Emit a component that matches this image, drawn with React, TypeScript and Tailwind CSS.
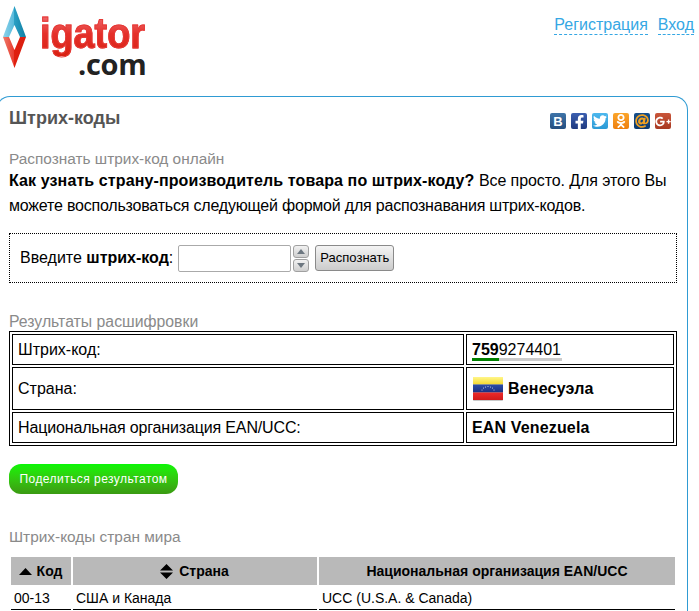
import React from "react";
import { FaFacebookF, FaTwitter, FaOdnoklassniki, FaGooglePlusG, FaAt } from "react-icons/fa";

function Logo() {
  return (
    <div className="relative h-[96px] w-[300px]">
      <svg className="absolute left-[3px] top-[6px]" width="24" height="63" viewBox="0 0 24 63">
        <defs>
          <linearGradient id="up" x1="0" y1="0" x2="1" y2="0">
            <stop offset="0" stopColor="#8fd4ec" />
            <stop offset="0.5" stopColor="#55b8da" />
            <stop offset="0.5" stopColor="#2a9fc4" />
            <stop offset="1" stopColor="#0f7fa3" />
          </linearGradient>
          <linearGradient id="dn" x1="0" y1="0" x2="1" y2="0">
            <stop offset="0" stopColor="#ee7a6a" />
            <stop offset="0.5" stopColor="#e8392c" />
            <stop offset="0.5" stopColor="#e0200f" />
            <stop offset="1" stopColor="#d81e10" />
          </linearGradient>
        </defs>
        <path d="M11.5 0 L23 31 L17 31 L11.5 19 L6 31 L0 31 Z" fill="url(#up)" />
        <path d="M0 31 L6 31 L11.5 44 L17 31 L23 31 L11.5 62 Z" fill="url(#dn)" />
      </svg>
      <div className="absolute left-[40px] top-[11px] origin-left scale-x-[0.9] bg-gradient-to-b from-[#f0707a] via-[#e5302a] to-[#d8200f] bg-clip-text text-[42px] font-bold leading-[45px] text-transparent [-webkit-text-stroke:1px_#e63a36] [font-family:'Liberation_Sans',sans-serif]">
        igator
      </div>
      <div className="absolute left-[78px] top-[56px] text-[29px] font-bold leading-[16px] tracking-[-0.3px] text-[#222222] [font-family:'Open_Sans',sans-serif]">
        .com
      </div>
    </div>
  );
}

function Social({ bg, children }: { bg: string; children: React.ReactNode }) {
  return (
    <span className={`flex h-4 w-4 items-center justify-center overflow-hidden rounded-[2px] text-white ${bg}`}>
      {children}
    </span>
  );
}

function Flag() {
  return (
    <svg width="30" height="24" viewBox="0 0 30 24" className="ml-px shrink-0">
      <defs>
        <linearGradient id="fy" x1="0" y1="0" x2="0" y2="1">
          <stop offset="0" stopColor="#fff68a" />
          <stop offset="1" stopColor="#f6d92e" />
        </linearGradient>
        <linearGradient id="fb" x1="0" y1="0" x2="0" y2="1">
          <stop offset="0" stopColor="#2c4ea8" />
          <stop offset="1" stopColor="#1a2f80" />
        </linearGradient>
        <linearGradient id="fr" x1="0" y1="0" x2="0" y2="1">
          <stop offset="0" stopColor="#ec2a2a" />
          <stop offset="1" stopColor="#cf1a1a" />
        </linearGradient>
      </defs>
      <rect x="0" y="0" width="30" height="24" rx="1" fill="#c9c9c9" />
      <rect x="0" y="0" width="30" height="7.5" fill="url(#fy)" />
      <rect x="0" y="7.5" width="30" height="8" fill="url(#fb)" />
      <rect x="0" y="15.5" width="30" height="7.5" fill="url(#fr)" />
      <g fill="#dfe6f5">
        <circle cx="9" cy="13" r="0.5" />
        <circle cx="10.5" cy="11" r="0.5" />
        <circle cx="12.5" cy="10" r="0.5" />
        <circle cx="15" cy="9.5" r="0.5" />
        <circle cx="17.5" cy="10" r="0.5" />
        <circle cx="19.5" cy="11" r="0.5" />
        <circle cx="21" cy="13" r="0.5" />
      </g>
    </svg>
  );
}

function Spin({ up }: { up: boolean }) {
  return (
    <span className="flex h-[13px] w-4 items-center justify-center rounded-[3px] border border-[#a0a0a0] bg-gradient-to-b from-[#f2f2f2] to-[#cfcfcf]">
      <svg width="8" height="5" viewBox="0 0 8 5">
        <path d={up ? "M0 5 L4 0 L8 5 Z" : "M0 0 L4 5 L8 0 Z"} fill="#6d7780" />
      </svg>
    </span>
  );
}

const cell = "border border-black px-[5px] align-middle";

export default function App() {
  return (
    <div className="h-[611px] w-[699px] overflow-hidden bg-white text-[16px] text-black [font-family:'Liberation_Sans',Arial,sans-serif]">
      <header className="flex items-start justify-between pr-[5px]">
        <Logo />
        <nav className="mt-[16px] flex gap-[10px] text-[16px] leading-[18px] text-[#35a7e4]">
          <span className="border-b border-dashed border-[#35a7e4]">Регистрация</span>
          <span className="border-b border-dashed border-[#35a7e4]">Вход</span>
        </nav>
      </header>

      <main className="ml-[-4px] h-[600px] w-[692px] rounded-t-[14px] border border-b-0 border-[#2f9bd3] pl-[12px] pr-[9px]">
        <div className="flex items-start justify-between pt-[9px]">
          <h1 className="text-[18px] font-bold leading-[24px] text-[#555555]">Штрих-коды</h1>
          <div className="mr-[7px] mt-[7px] flex gap-[5px]">
            <Social bg="bg-gradient-to-b from-[#3f74a8] to-[#254f80]"><span className="text-[13px] font-bold leading-none">В</span></Social>
            <Social bg="bg-gradient-to-b from-[#3b5fb0] to-[#1f3a80]"><FaFacebookF className="mt-[3px]" size={15} /></Social>
            <Social bg="bg-gradient-to-b from-[#4db8ee] to-[#2a9ad6]"><FaTwitter size={14} /></Social>
            <Social bg="bg-gradient-to-b from-[#fba52a] to-[#ee7f0a]"><FaOdnoklassniki size={14} /></Social>
            <Social bg="bg-gradient-to-b from-[#164f8c] to-[#0c3a6e]"><FaAt className="text-[#f0a020]" size={14} /></Social>
            <Social bg="bg-gradient-to-b from-[#c9553a] to-[#a83a22]"><FaGooglePlusG size={17} /></Social>
          </div>
        </div>

        <h2 className="mt-[19px] text-[15.4px] leading-[19px] text-[#8a8a8a]">Распознать штрих-код онлайн</h2>
        <p className="mr-[2px] text-[16px] leading-[25px]">
          <b className="tracking-[0.11px]">Как узнать страну-производитель товара по штрих-коду?</b>{" "}
          <span className="tracking-[-0.08px]">Все просто. Для этого Вы</span>{" "}
          <span className="tracking-[-0.2px]">можете воспользоваться следующей формой для распознавания штрих-кодов.</span>
        </p>

        <div className="mt-[15px] flex h-[50px] w-[668px] items-center border border-dotted border-black pl-[10px]">
          <span>Введите <b>штрих-код</b>:</span>
          <span className="ml-[5px] h-[27px] w-[113px] rounded-[2px] border border-[#aaaaaa]" />
          <span className="ml-[2px] flex flex-col gap-px">
            <Spin up />
            <Spin up={false} />
          </span>
          <button className="ml-[6px] h-[26px] w-[79px] rounded-[3px] border border-[#8a8a8a] bg-gradient-to-b from-[#f4f4f4] to-[#cccccc] text-[13px] text-black">Распознать</button>
        </div>

        <h2 className="mt-[30px] text-[15.8px] leading-[18px] text-[#8a8a8a]">Результаты расшифровки</h2>
        <table className="w-[668px] table-fixed border-separate border-spacing-[2px] border border-black">
          <colgroup>
            <col className="w-[452px]" />
            <col />
          </colgroup>
          <tbody>
            <tr className="h-[31px]">
              <td className={cell}>Штрих-код:</td>
              <td className="border border-black px-[5px] pt-[6px] align-top">
                <div className="leading-[17px]">
                  <b>759</b>9274401
                </div>
                <div className="flex h-[3px] w-[90px] bg-[#cccccc]"><div className="w-[27px] bg-[#008000]" /></div>
              </td>
            </tr>
            <tr className="h-[43px]">
              <td className={cell}>Страна:</td>
              <td className={cell}>
                <div className="flex items-center gap-[5px] font-bold tracking-[0.2px]"><Flag />Венесуэла</div>
              </td>
            </tr>
            <tr className="h-[31px]">
              <td className={`${cell} tracking-[-0.15px]`}>Национальная организация EAN/UCC:</td>
              <td className={`${cell} font-bold tracking-[0.15px]`}>EAN Venezuela</td>
            </tr>
          </tbody>
        </table>

        <button className="mt-[18px] flex h-[30px] w-[169px] items-center justify-center rounded-[12px] bg-gradient-to-b from-[#06f706] to-[#3a9a12] text-[12px] tracking-[0.45px] text-white">Поделиться результатом</button>

        <h2 className="mt-[34px] text-[15.4px] leading-[18px] text-[#8a8a8a]">Штрих-коды стран мира</h2>
        <table className="mt-[9px] w-[668px] table-fixed border-separate border-spacing-[2px] text-[14px]">
          <colgroup>
            <col className="w-[60px]" />
            <col className="w-[244px]" />
            <col />
          </colgroup>
          <thead>
            <tr className="h-[28px] bg-[#b9b9b9] font-bold">
              <th>
                <span className="flex items-center justify-center gap-[5px] pr-px">
                  <svg width="13" height="7" viewBox="0 0 13 7"><path d="M0 7 L6.5 0 L13 7 Z" fill="#000" /></svg>
                  Код
                </span>
              </th>
              <th>
                <span className="flex items-center justify-center gap-[6px] pr-px">
                  <svg width="13" height="15" viewBox="0 0 13 15"><path d="M0 6.5 L6.5 0 L13 6.5 Z M0 8.5 L13 8.5 L6.5 15 Z" fill="#000" /></svg>
                  Страна
                </span>
              </th>
              <th>Национальная организация EAN/UCC</th>
            </tr>
          </thead>
          <tbody>
            <tr className="h-[23px]">
              <td className="border-b border-black px-[3px]">00-13</td>
              <td className="border-b border-black px-[3px]">США и Канада</td>
              <td className="border-b border-black px-[3px]">UCC (U.S.A. &amp; Canada)</td>
            </tr>
          </tbody>
        </table>
      </main>
    </div>
  );
}
